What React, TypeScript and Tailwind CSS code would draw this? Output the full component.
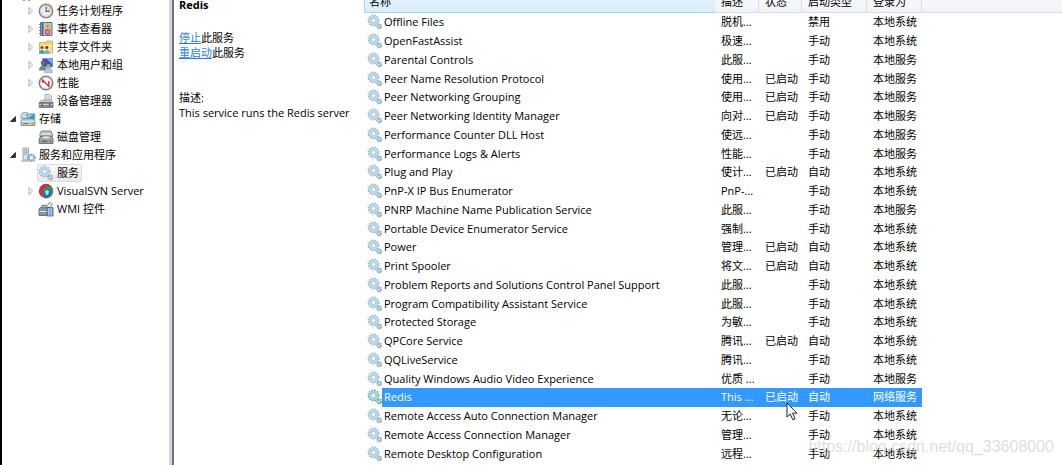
import React, { useState } from 'react';

type Service = {
  name: string;
  desc: string;
  running?: boolean;
  start: string;
  logon: string;
};

const SYS = '本地系统';
const LOCAL = '本地服务';

const services: Service[] = [
  { name: 'Offline Files', desc: '脱机...', start: '禁用', logon: SYS },
  { name: 'OpenFastAssist', desc: '极速...', start: '手动', logon: SYS },
  { name: 'Parental Controls', desc: '此服...', start: '手动', logon: LOCAL },
  { name: 'Peer Name Resolution Protocol', desc: '使用...', running: true, start: '手动', logon: LOCAL },
  { name: 'Peer Networking Grouping', desc: '使用...', running: true, start: '手动', logon: LOCAL },
  { name: 'Peer Networking Identity Manager', desc: '向对...', running: true, start: '手动', logon: LOCAL },
  { name: 'Performance Counter DLL Host', desc: '使远...', start: '手动', logon: LOCAL },
  { name: 'Performance Logs & Alerts', desc: '性能...', start: '手动', logon: LOCAL },
  { name: 'Plug and Play', desc: '使计...', running: true, start: '自动', logon: SYS },
  { name: 'PnP-X IP Bus Enumerator', desc: 'PnP-...', start: '手动', logon: SYS },
  { name: 'PNRP Machine Name Publication Service', desc: '此服...', start: '手动', logon: LOCAL },
  { name: 'Portable Device Enumerator Service', desc: '强制...', start: '手动', logon: SYS },
  { name: 'Power', desc: '管理...', running: true, start: '自动', logon: SYS },
  { name: 'Print Spooler', desc: '将文...', running: true, start: '自动', logon: SYS },
  { name: 'Problem Reports and Solutions Control Panel Support', desc: '此服...', start: '手动', logon: SYS },
  { name: 'Program Compatibility Assistant Service', desc: '此服...', start: '手动', logon: SYS },
  { name: 'Protected Storage', desc: '为敏...', start: '手动', logon: SYS },
  { name: 'QPCore Service', desc: '腾讯...', running: true, start: '自动', logon: SYS },
  { name: 'QQLiveService', desc: '腾讯...', start: '手动', logon: SYS },
  { name: 'Quality Windows Audio Video Experience', desc: '优质 ...', start: '手动', logon: LOCAL },
  { name: 'Redis', desc: 'This ...', running: true, start: '自动', logon: '网络服务' },
  { name: 'Remote Access Auto Connection Manager', desc: '无论...', start: '手动', logon: SYS },
  { name: 'Remote Access Connection Manager', desc: '管理...', start: '手动', logon: SYS },
  { name: 'Remote Desktop Configuration', desc: '远程...', start: '手动', logon: SYS },
];

const GearsIcon = ({ active = false }: { active?: boolean }) => (
  <svg viewBox="0 0 16 16" className="size-4 shrink-0">
    <circle cx="6.5" cy="6.5" r="5.1" fill="none" stroke={active ? '#5fa27c' : '#8fb0c6'} strokeWidth="1.7" strokeDasharray="1.5 1.17" />
    <circle cx="6.5" cy="6.5" r="3.5" fill="none" stroke={active ? '#9fd6df' : '#b9d7ea'} strokeWidth="2.6" />
    <circle cx="6.5" cy="6.5" r="2.1" fill="#fff" stroke="#86acc6" strokeWidth=".6" />
    <circle cx="12.2" cy="12.4" r="2.2" fill="none" stroke={active ? '#4f9662' : '#809fb3'} strokeWidth="1.5" strokeDasharray="1.1 .63" />
    <circle cx="12.2" cy="12.4" r="1.3" fill="#fff" stroke="#9dbdd1" strokeWidth="1.2" />
  </svg>
);

const ToolsIcon = () => (
  <svg viewBox="0 0 16 16" className="size-4 shrink-0">
    <path d="M4 2v12.5" stroke="#8d949b" strokeWidth="3" strokeLinecap="round" />
    <path d="M9 2v12.5" stroke="#d09a2c" strokeWidth="3" strokeLinecap="round" />
  </svg>
);

const ClockIcon = () => (
  <svg viewBox="0 0 16 16" className="size-4 shrink-0">
    <circle cx="8" cy="8" r="6.7" fill="#e8eef6" stroke="#858789" strokeWidth="1.5" />
    <path d="M8 8V3a5 5 0 0 1 5 5z" fill="#f3d88c" />
    <circle cx="8" cy="8" r="5.4" fill="none" stroke="#c2cad4" strokeWidth=".8" />
    <path d="M8 3.500V8.400h3.600" fill="none" stroke="#5c6775" strokeWidth="1.100" />
  </svg>
);

const EventIcon = () => (
  <svg viewBox="0 0 16 16" className="size-4 shrink-0">
    <path d="M2.500 1.500h11.500v13H2.500z" fill="#b9c7e6" stroke="#5f6f9e" />
    <path d="M4.500 2v12" stroke="#4b5d94" strokeWidth="1.800" />
    <path d="M1 3.500h3M1 6.500h3M1 9.500h3M1 12.500h3" stroke="#6d7690" strokeWidth=".9" />
    <path d="M9.800 2.500l3.200 5.200H6.600z" fill="#f7d43c" stroke="#c39a20" strokeWidth=".5" />
    <path d="M9.800 4.200v2.200" stroke="#5a4710" strokeWidth=".8" />
    <circle cx="9.600" cy="11" r="2.700" fill="#d9434b" />
    <path d="M8.500 9.900l2.200 2.200m0-2.200l-2.200 2.200" stroke="#fff" strokeWidth=".8" />
  </svg>
);

const ShareIcon = () => (
  <svg viewBox="0 0 16 16" className="size-4 shrink-0">
    <path d="M1.500 3.500h6l1.200-1.500H14.500V14h-13z" fill="#f2cf72" stroke="#cfa446" strokeWidth=".8" />
    <path d="M2 5.500h12v8H2z" fill="#f9e09a" />
    <circle cx="4" cy="8.600" r="1.500" fill="#6b4a2e" />
    <path d="M1 14.800c0-5 5.600-5 5.600 0z" fill="#3fa0ac" />
    <circle cx="8.800" cy="8.600" r="1.500" fill="#574029" />
    <path d="M6.200 14.800c0-5 5.600-5 5.600 0z" fill="#6fb0c8" />
  </svg>
);

const UsersIcon = () => (
  <svg viewBox="0 0 16 16" className="size-4 shrink-0">
    <path d="M4.500 1.500h10v8.500h-10z" fill="#3055bd" stroke="#8b95a8" />
    <path d="M9 2h5v5z" fill="#86a9ec" />
    <circle cx="4.800" cy="6" r="2.200" fill="#80665a" />
    <path d="M1 13.500c0-6.500 7.400-6.500 7.400 0z" fill="#71858f" />
    <circle cx="10.400" cy="9" r="2.100" fill="#b99b82" />
    <path d="M6.400 15.500c0-6 8-6 8 0z" fill="#a9cddd" stroke="#6f98ad" strokeWidth=".5" />
  </svg>
);

const PerformanceIcon = () => (
  <svg viewBox="0 0 16 16" className="size-4 shrink-0">
    <circle cx="8" cy="8" r="6.700" fill="#fff" stroke="#7d8083" strokeWidth="1.600" />
    <circle cx="8" cy="8" r="5.500" fill="none" stroke="#c9cccf" strokeWidth=".8" />
    <path d="M4.600 8V5l6.200 6.200V6" fill="none" stroke="#d93535" strokeWidth="1.500" />
  </svg>
);

const DeviceIcon = () => (
  <svg viewBox="0 0 16 16" className="size-4 shrink-0">
    <path d="M7 1.500h5L13.500 3v5H7z" fill="#e3e6e7" stroke="#9aa0a3" strokeWidth=".8" />
    <path d="M8.500 4h3.500M8.500 6h3.500" stroke="#b3b9bc" strokeWidth=".7" />
    <path d="M1.500 9.500l2-2.500h9.500l2 2.500z" fill="#ced2d4" stroke="#858b8f" strokeWidth=".6" />
    <path d="M1.200 9.500H15v5H1.200z" fill="#858d91" stroke="#666d71" strokeWidth=".8" />
    <path d="M1.500 11.500h13" stroke="#dfe3e5" strokeWidth=".8" />
    <path d="M4 10.500v2.300M11.600 10.500v2.300" stroke="#444b4f" strokeWidth="1.300" />
  </svg>
);

const StorageIcon = () => (
  <svg viewBox="0 0 16 16" className="size-4 shrink-0">
    <path d="M1 3.500l2-1.800h5v6H1z" fill="#cfd8dc" stroke="#7f8d94" strokeWidth=".7" />
    <path d="M6.500 2.500h8.500v6H6.500z" fill="#2f9bcb" stroke="#b5c2c9" />
    <path d="M7.500 3.500h6l-6 4z" fill="#8dd6f0" />
    <path d="M1 10l2-2.300h9.500L15 10v4.500H1z" fill="#c0c7ca" stroke="#757f84" strokeWidth=".8" />
    <path d="M1.400 10.300h13.200" stroke="#f3f5f6" strokeWidth=".9" />
    <circle cx="12.400" cy="12.500" r="1" fill="#5ac14c" />
    <path d="M3 12.500h5" stroke="#6b7377" strokeWidth=".9" />
  </svg>
);

const DiskIcon = () => (
  <svg viewBox="0 0 16 16" className="size-4 shrink-0">
    <path d="M2 5l1.600-3h9L14.400 5v2.500H2z" fill="#c2c6c6" stroke="#696f6f" strokeWidth=".9" />
    <path d="M2.200 5.200h12" stroke="#f5f6f6" strokeWidth=".8" />
    <path d="M1.200 10l1.600-3h10.600L15 10v4.400H1.200z" fill="#a3a9a9" stroke="#5d6363" strokeWidth=".9" />
    <ellipse cx="8" cy="8.500" rx="3.800" ry="1.400" fill="#edf0f0" stroke="#737979" strokeWidth=".5" />
    <path d="M3.500 12.200h6" stroke="#4d5353" />
    <circle cx="12.400" cy="12.200" r=".9" fill="#5b6262" />
  </svg>
);

const ServerIcon = () => (
  <svg viewBox="0 0 16 16" className="size-4 shrink-0">
    <path d="M3 1h5.500v12H3z" fill="#dce3e8" stroke="#8b99a5" strokeWidth=".8" />
    <path d="M4 3.200h3.500M4 5.200h3.500M4 7.200h3.500" stroke="#77899a" strokeWidth=".8" />
    <path d="M1.500 13h7v1.800h-7z" fill="#b5c0c9" />
    <circle cx="11.400" cy="10.800" r="3.500" fill="none" stroke="#6688a8" strokeWidth="1.500" strokeDasharray="1.400 .8" />
    <circle cx="11.400" cy="10.800" r="2.300" fill="#fff" stroke="#a0c3dc" strokeWidth="1.600" />
  </svg>
);

const SvnIcon = () => (
  <svg viewBox="0 0 16 16" className="size-4 shrink-0">
    <circle cx="8" cy="8" r="7.200" fill="#c9303f" />
    <path d="M4.500 7.500C6 3.500 11 2.500 14.600 5.200 16.500 10.500 12.500 15.500 7.500 15.200 5.500 13 4 10.500 4.500 7.500z" fill="#2f9a55" />
    <path d="M6 8.500c1-3 5-3.500 6.500-1 1 3-.8 6-3.500 7.600-.8.200-1.700.100-2.200 0C5.800 13 5.400 10.500 6 8.500z" fill="#1f6fb2" />
    <path d="M7.200 8.200c.8-1.600 3-1.600 3.600 0 .3 1.800-.6 3.400-2 4.400-1-.900-1.900-2.800-1.600-4.400z" fill="#a6dcee" />
  </svg>
);

const WmiIcon = () => (
  <svg viewBox="0 0 16 16" className="size-4 shrink-0">
    <path d="M1 8l2-2h8l1 2v6.500H1z" fill="#87939d" stroke="#5a656f" strokeWidth=".8" />
    <path d="M1.400 10.500h8" stroke="#e2e7ea" />
    <path d="M4 5.800V4.300h4v1.500" fill="none" stroke="#5f6a73" />
    <path d="M9 6.500H15V15H9z" fill="#7499d0" stroke="#45618f" strokeWidth=".8" />
    <path d="M10.800 7v7.500M13.200 7v7.500" stroke="#dce8f7" strokeWidth=".8" />
    <path d="M9 4.500L12.500 1M12.500 5.500L14.500 2" stroke="#8f9aa3" strokeWidth="1.300" />
  </svg>
);

type Node = {
  label: string;
  icon: React.ReactNode;
  level: 1 | 2;
  state?: 'open' | 'closed';
  selected?: boolean;
};

const tree: Node[] = [
  { label: '', icon: <ToolsIcon />, level: 1 },
  { label: '任务计划程序', icon: <ClockIcon />, level: 2, state: 'closed' },
  { label: '事件查看器', icon: <EventIcon />, level: 2, state: 'closed' },
  { label: '共享文件夹', icon: <ShareIcon />, level: 2, state: 'closed' },
  { label: '本地用户和组', icon: <UsersIcon />, level: 2, state: 'closed' },
  { label: '性能', icon: <PerformanceIcon />, level: 2, state: 'closed' },
  { label: '设备管理器', icon: <DeviceIcon />, level: 2 },
  { label: '存储', icon: <StorageIcon />, level: 1, state: 'open' },
  { label: '磁盘管理', icon: <DiskIcon />, level: 2 },
  { label: '服务和应用程序', icon: <ServerIcon />, level: 1, state: 'open' },
  { label: '服务', icon: <GearsIcon />, level: 2, selected: true },
  { label: 'VisualSVN Server', icon: <SvnIcon />, level: 2, state: 'closed' },
  { label: 'WMI 控件', icon: <WmiIcon />, level: 2 },
];

const Arrow = ({ state }: { state?: 'open' | 'closed' }) => {
  if (!state) return <span className="w-3 shrink-0" />;
  return (
    <button type="button" className="w-3 shrink-0">
      <svg viewBox="0 0 12 12" className="size-3">
        {state === 'open' ? (
          <path d="M8.500 3.500v5h-5z" fill="#333" stroke="#222" strokeWidth=".8" />
        ) : (
          <path d="M4 2.500L7.500 6 4 9.500z" fill="#fff" stroke="#a3a3a3" strokeWidth=".9" />
        )}
      </svg>
    </button>
  );
};

const headClass = 'border-r border-b border-[#d8dce4] bg-linear-to-b from-white to-[#f1f3f7] px-1.5 pt-2 text-left font-normal';

const App = () => {
  const [selected, setSelected] = useState('Redis');

  return (
    <div className="relative flex h-screen overflow-hidden border-l-2 border-black bg-white font-['Open_Sans','Noto_Sans_CJK_SC',sans-serif] text-[11px] text-black">
      {/* Console tree */}
      <nav className="w-[170px] shrink-0 overflow-hidden border-r-3 border-[#d3d4e2] pl-[5px]">
        <ul className="-mt-4">
          {tree.map((node, i) => (
            <li key={i} className={`flex h-[18px] items-center ${node.level === 2 ? 'pl-[18px]' : ''}`}>
              <Arrow state={node.state} />
              <a
                href="#"
                className={`flex h-[18px] items-center gap-[3px] rounded-xs border pr-0.5 whitespace-nowrap ${
                  node.selected ? 'border-[#dcdcdc] bg-linear-to-b from-[#fafafa] to-[#e9e9e9]' : 'border-transparent'
                }`}
              >
                {node.icon}
                {node.label}
              </a>
            </li>
          ))}
        </ul>
      </nav>

      {/* Selected service details */}
      <section className="-mt-[3px] w-[192px] shrink-0 border-l-2 border-[#707078] pl-[5px] leading-[15px]">
        <h1 className="mb-[18px] text-[11px] font-bold">{selected}</h1>
        <p>
          <a href="#" className="text-[#2a7de1] underline">停止</a>此服务
        </p>
        <p>
          <a href="#" className="text-[#2a7de1] underline">重启动</a>此服务
        </p>
        <p className="mt-[30px]">描述:</p>
        <p>This service runs the Redis server</p>
      </section>

      {/* Service list */}
      <main className="-mt-4 min-w-0 flex-1">
        <table className="h-[498px] w-full table-fixed border-separate border-spacing-0 leading-4 whitespace-nowrap">
          <colgroup>
            <col className="w-[351px]" />
            <col className="w-[44px]" />
            <col className="w-[43px]" />
            <col className="w-[65px]" />
            <col className="w-[55px]" />
            <col />
          </colgroup>
          <thead>
            <tr className="h-[29px]">
              <th className="border-b border-l border-[#a5d5ea] bg-linear-to-b from-[#eef8fd] to-[#d8eefa] px-1 pt-2 text-left font-normal">名称</th>
              <th className={headClass}>描述</th>
              <th className={headClass}>状态</th>
              <th className={headClass}>启动类型</th>
              <th className={headClass}>登录为</th>
              <th className="border-b border-[#d8dce4] bg-linear-to-b from-white to-[#f1f3f7]" />
            </tr>
          </thead>
          <tbody>
            {services.map((s) => {
              const active = s.name === selected;
              const cell = active ? 'bg-[#3399ff] px-1.5 text-white' : 'px-1.5';
              return (
                <tr key={s.name} onClick={() => setSelected(s.name)}>
                  <td className={`py-px pl-[3px] ${active ? 'bg-linear-to-r from-white from-[18px] to-[#3399ff] to-[18px] text-white' : ''}`}>
                    <div className="flex items-center gap-px">
                      <GearsIcon active={active} />
                      {s.name}
                    </div>
                  </td>
                  <td className={cell}>{s.desc}</td>
                  <td className={cell}>{s.running ? '已启动' : ''}</td>
                  <td className={cell}>{s.start}</td>
                  <td className={cell}>{s.logon}</td>
                  <td />
                </tr>
              );
            })}
            {/* next service, scrolled below the fold */}
            <tr>
              <td className="py-px pl-[3px]">
                <GearsIcon />
              </td>
            </tr>
          </tbody>
        </table>
      </main>

      {/* Mouse pointer */}
      <svg viewBox="0 0 12 19" className="absolute top-[402px] left-[784px] h-[19px] w-3">
        <path d="M1 1v14l3.300-3 2.500 5.800 2.300-1-2.500-5.600H11z" fill="#fff" stroke="#222" />
      </svg>

      <span className="absolute right-2 bottom-1.5 font-['Liberation_Sans',sans-serif] text-base text-[#d6d6d6]/80">
        https://blog.csdn.net/qq_33608000
      </span>
    </div>
  );
};

export default App;
